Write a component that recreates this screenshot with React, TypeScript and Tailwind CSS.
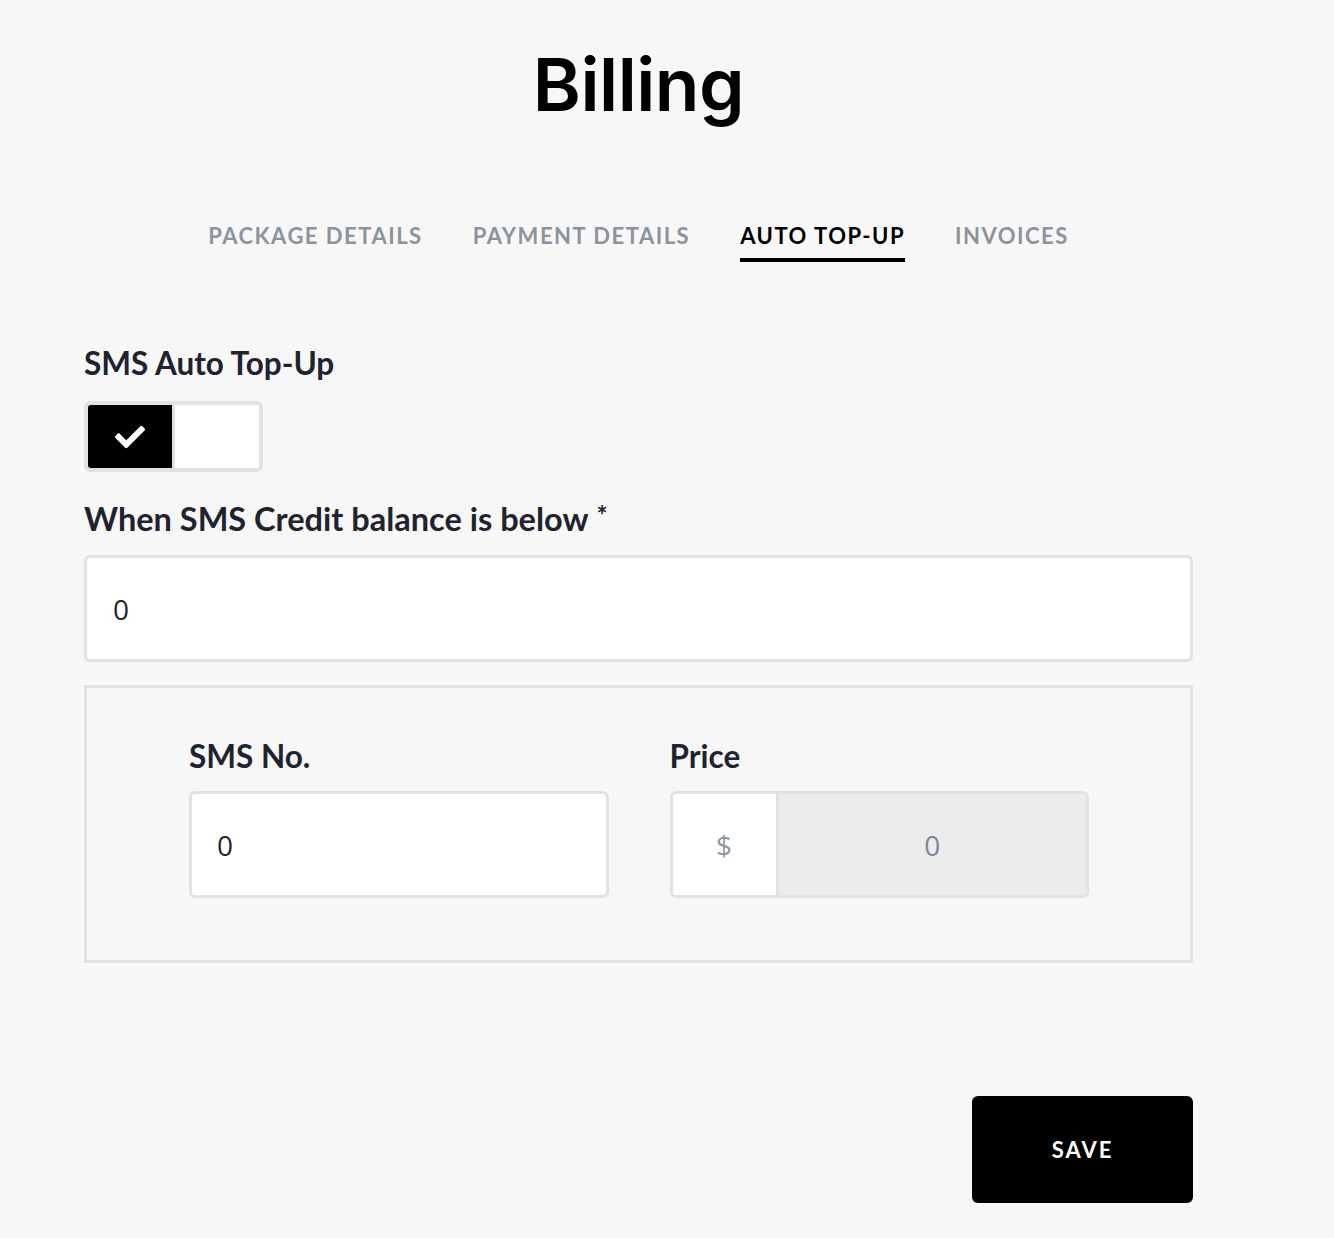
import React from 'react';
import { FaCheck } from 'react-icons/fa';

const tabs = [
  { id: 'package', label: 'PACKAGE DETAILS' },
  { id: 'payment', label: 'PAYMENT DETAILS' },
  { id: 'topup', label: 'AUTO TOP-UP' },
  { id: 'invoices', label: 'INVOICES' },
];

const labelFont = { fontFamily: 'Lato, "Noto Sans", sans-serif' };
const inputFont = { fontFamily: '"Open Sans", "Noto Sans", sans-serif' };

function Label({ children, className = 'text-[31.5px]' }: { children: React.ReactNode; className?: string }) {
  return (
    <div className={`${className} font-bold leading-[40px] text-[#1f2330]`} style={labelFont}>
      {children}
    </div>
  );
}

export default function App() {
  const active = 'topup';

  return (
    <div className="min-h-screen bg-[#f7f7f7]">
      <div className="ml-[84px] w-[1109px] pt-[40px] pb-[35px]">
        {/* Title */}
        <h1
          className="text-center text-[73px] font-semibold leading-[90px] tracking-[-0.5px] text-black"
          style={{ fontFamily: 'Inter, "Noto Sans", sans-serif' }}
        >
          Billing
        </h1>

        {/* Tabs */}
        <div className="mt-[89px] flex justify-center gap-[50px]" style={labelFont}>
          {tabs.map((t) => (
            <div
              key={t.id}
              className={
                t.id === active
                  ? 'border-b-4 border-black pb-[6px] text-[22px] font-bold tracking-[1.5px] text-black'
                  : 'border-b-4 border-transparent pb-[6px] text-[22px] font-bold tracking-[1.5px] text-[#8b949c]'
              }
            >
              {t.label}
            </div>
          ))}
        </div>

        {/* Toggle */}
        <div className="mt-[81px]">
          <Label>SMS Auto Top-Up</Label>
          <div className="mt-[18px] flex h-[71px] w-[179px] rounded-[6px] border-4 border-[#e2e2e2] bg-[#e2e2e2]">
            <div className="flex w-[84px] items-center justify-center rounded-l-[3px] bg-black">
              <FaCheck className="h-[30px] w-[30px] text-white" />
            </div>
            <div className="ml-[3px] flex-1 rounded-r-[3px] bg-white" />
          </div>
        </div>

        {/* Threshold */}
        <div className="mt-[27px]">
          <div className="flex items-start">
            <Label className="text-[32.5px]">When SMS Credit balance is below</Label>
            <span className="ml-[8px] mt-[1px] text-[26px] font-bold leading-[30px] text-[#1f2330]" style={labelFont}>*</span>
          </div>
          <div
            className="mt-[16px] flex h-[107px] items-center rounded-[6px] border-[3px] border-[#e2e2e2] bg-white px-[26px] text-[28px] text-[#1f2330]"
            style={inputFont}
          >
            0
          </div>
        </div>

        {/* Package box */}
        <div className="mt-[23px] grid h-[278px] grid-cols-2 gap-[61px] border-[3px] border-[#e2e2e2] pl-[102px] pr-[101px] pt-[48px]">
          <div>
            <Label>SMS No.</Label>
            <div
              className="mt-[15px] flex h-[107px] items-center rounded-[6px] border-[3px] border-[#e2e2e2] bg-white px-[25px] text-[28px] text-[#1f2330]"
              style={inputFont}
            >
              0
            </div>
          </div>
          <div>
            <Label>Price</Label>
            <div className="mt-[15px] flex h-[107px] overflow-hidden rounded-[6px] border-[3px] border-[#e2e2e2]" style={inputFont}>
              <div className="flex w-[106px] items-center justify-center border-r-[3px] border-[#e2e2e2] bg-white text-[28px] text-[#8e96a0]">
                $
              </div>
              <div className="flex flex-1 items-center justify-center bg-[#ebebeb] text-[28px] text-[#7a85a3]">
                0
              </div>
            </div>
          </div>
        </div>

        {/* Save */}
        <div className="mt-[133px] flex justify-end">
          <button
            className="h-[107px] w-[221px] rounded-[6px] bg-black text-[22px] font-bold tracking-[2px] text-white"
            style={labelFont}
          >
            SAVE
          </button>
        </div>
      </div>
    </div>
  );
}
